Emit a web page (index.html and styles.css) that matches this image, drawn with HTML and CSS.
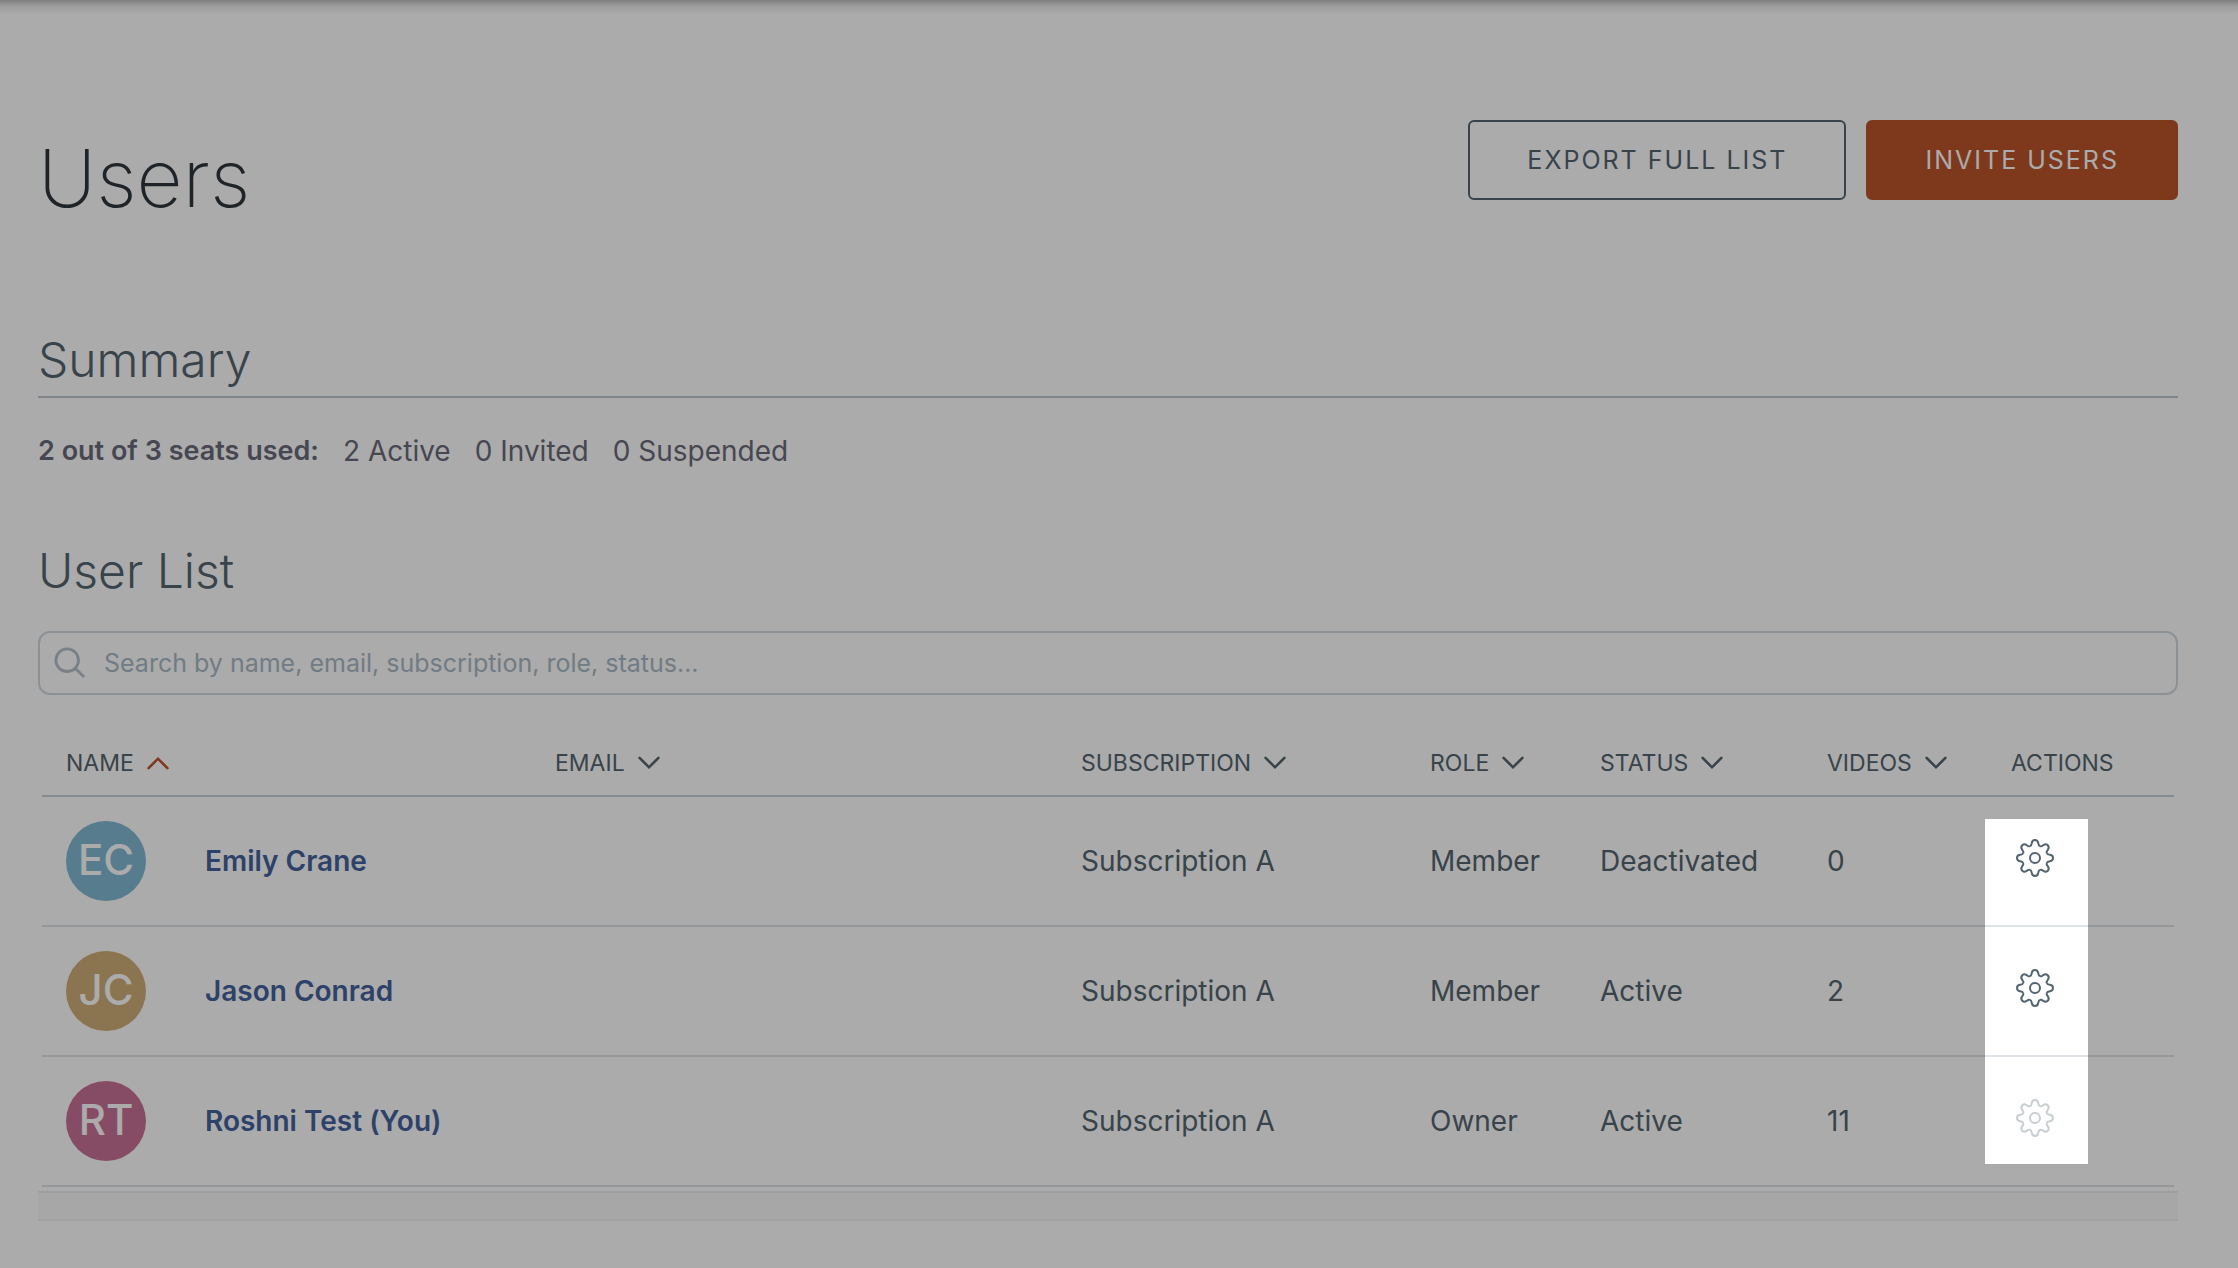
FILE: index.html
```html
<!DOCTYPE html>
<html lang="en">

<head>
    <meta charset="UTF-8">
    <meta name="viewport" content="width=device-width, initial-scale=1">
    <title>Users</title>
    <link rel="stylesheet" href="styles.css">
</head>

<body>
    <!-- shared icons -->
    <svg class="sprite" aria-hidden="true">
        <symbol id="chevron" viewBox="0 0 28 16">
            <path d="M3 2l11 11 11-11" />
        </symbol>
        <symbol id="gear" viewBox="-20 -20 40 40">
            <path id="tooth" d="M-4.900-11.800C-3.500-12.400-3.400-13.600-3.200-15C-2.900-17-1.800-18 0-18C1.800-18 2.900-17 3.200-15C3.400-13.600 3.500-12.400 4.900-11.800" />
            <use href="#tooth" transform="rotate(45)" />
            <use href="#tooth" transform="rotate(90)" />
            <use href="#tooth" transform="rotate(135)" />
            <use href="#tooth" transform="rotate(180)" />
            <use href="#tooth" transform="rotate(225)" />
            <use href="#tooth" transform="rotate(270)" />
            <use href="#tooth" transform="rotate(315)" />
            <circle r="5" />
        </symbol>
    </svg>

    <main class="page">
        <header class="page-header">
            <h1>Users</h1>
            <div class="buttons">
                <button type="button" class="btn">EXPORT FULL LIST</button>
                <button type="button" class="btn btn-primary">INVITE USERS</button>
            </div>
        </header>

        <section class="summary">
            <h2>Summary</h2>
            <p class="seats">
                <strong>2 out of 3 seats used:</strong>
                <span>2 Active</span>
                <span>0 Invited</span>
                <span>0 Suspended</span>
            </p>
        </section>

        <section class="user-list">
            <h2>User List</h2>
            <label class="search">
                <svg viewBox="0 0 34 34" aria-hidden="true">
                    <circle cx="14" cy="14" r="12" />
                    <path d="M23 23l9 9" />
                </svg>
                <input type="search" aria-label="Search users" placeholder="Search by name, email, subscription, role, status...">
            </label>

            <table class="users">
                <colgroup>
                    <col class="col-name">
                    <col>
                    <col class="col-subscription">
                    <col class="col-role">
                    <col class="col-status">
                    <col class="col-videos">
                    <col class="col-actions">
                </colgroup>
                <thead>
                    <tr>
                        <th><button type="button" class="sort sorted">NAME <svg><use href="#chevron" /></svg></button></th>
                        <th><button type="button" class="sort">EMAIL <svg><use href="#chevron" /></svg></button></th>
                        <th><button type="button" class="sort">SUBSCRIPTION <svg><use href="#chevron" /></svg></button></th>
                        <th><button type="button" class="sort">ROLE <svg><use href="#chevron" /></svg></button></th>
                        <th><button type="button" class="sort">STATUS <svg><use href="#chevron" /></svg></button></th>
                        <th><button type="button" class="sort">VIDEOS <svg><use href="#chevron" /></svg></button></th>
                        <th>ACTIONS</th>
                    </tr>
                </thead>
                <tbody>
                    <tr>
                        <td>
                            <div class="user">
                                <span class="avatar blue">EC</span>
                                <a href="#">Emily Crane</a>
                            </div>
                        </td>
                        <td></td>
                        <td>Subscription A</td>
                        <td>Member</td>
                        <td>Deactivated</td>
                        <td>0</td>
                        <td class="actions">
                            <button type="button" class="gear" aria-label="Manage Emily Crane"><svg><use href="#gear" /></svg></button>
                            <!-- dims everything except the gear column -->
                            <div class="spotlight"></div>
                        </td>
                    </tr>
                    <tr>
                        <td>
                            <div class="user">
                                <span class="avatar gold">JC</span>
                                <a href="#">Jason Conrad</a>
                            </div>
                        </td>
                        <td></td>
                        <td>Subscription A</td>
                        <td>Member</td>
                        <td>Active</td>
                        <td>2</td>
                        <td class="actions">
                            <button type="button" class="gear" aria-label="Manage Jason Conrad"><svg><use href="#gear" /></svg></button>
                        </td>
                    </tr>
                    <tr>
                        <td>
                            <div class="user">
                                <span class="avatar pink">RT</span>
                                <a href="#">Roshni Test (You)</a>
                            </div>
                        </td>
                        <td></td>
                        <td>Subscription A</td>
                        <td>Owner</td>
                        <td>Active</td>
                        <td>11</td>
                        <td class="actions">
                            <button type="button" class="gear" aria-label="Manage Roshni Test" disabled><svg><use href="#gear" /></svg></button>
                        </td>
                    </tr>
                </tbody>
            </table>
            <div class="list-footer"></div>
        </section>
    </main>
</body>

</html>
```
FILE: styles.css
```css
* {
    box-sizing: border-box;
}

body {
    min-height: 100vh;
    margin: 0;
    background: #fff linear-gradient(#bdbdbd, #e9e9e9 6px, #fff 14px) no-repeat;
    background-size: 100% 14px;
    color: #54656f;
    font-family: Inter, "Liberation Sans", sans-serif;
    font-size: 28px;
    line-height: 40px;
}

.sprite {
    display: none;
}

button {
    font: inherit;
    color: inherit;
    cursor: pointer;
}

.page {
    padding: 120px 60px 40px 38px;
}

.page-header {
    display: flex;
    justify-content: space-between;
    align-items: flex-start;
}

h1 {
    margin: 8px 0 0;
    color: #2d373c;
    font-size: 80px;
    font-weight: 200;
    line-height: 100px;
}

h2 {
    margin: 0;
    font-size: 48px;
    font-weight: 300;
    line-height: 60px;
}

.buttons {
    display: flex;
    gap: 20px;
}

.btn {
    height: 80px;
    padding: 0 57px;
    border: 2px solid #54656f;
    border-radius: 6px;
    background: transparent;
    font-size: 25px;
    letter-spacing: 2px;
}

.btn-primary {
    border-color: #bd542a;
    background: #bd542a;
    color: #fff;
}

.summary {
    margin-top: 102px;
}

.summary h2 {
    padding-bottom: 6px;
    border-bottom: 2px solid #bec7cf;
}

.seats {
    display: flex;
    gap: 24px;
    margin: 33px 0 0;
    color: #6b6b7b;
}

.seats strong {
    font-size: 27px;
    font-weight: 600;
}

.user-list {
    margin-top: 70px;
}

.search {
    display: flex;
    align-items: center;
    gap: 18px;
    height: 64px;
    margin-top: 30px;
    padding: 0 14px;
    border: 2px solid #d0d8de;
    border-radius: 12px;
}

.search svg {
    width: 32px;
    height: 32px;
    fill: none;
    stroke: #b5c1ca;
    stroke-width: 3;
}

.search input {
    flex: 1;
    padding: 0;
    border: 0;
    outline: 0;
    background: none;
    color: inherit;
    font: inherit;
    font-size: 25px;
}

.search input::placeholder {
    color: #a9b9c5;
}

.users {
    width: calc(100% - 8px);
    margin: 36px 4px 4px;
    border-collapse: separate;
    border-spacing: 0;
    table-layout: fixed;
}

.col-name {
    width: 489px;
}

.col-subscription {
    width: 349px;
}

.col-role {
    width: 170px;
}

.col-status {
    width: 227px;
}

.col-videos {
    width: 184px;
}

.col-actions {
    width: 187px;
}

.users th {
    height: 66px;
    padding: 0 0 0 24px;
    border-bottom: 2px solid #c6d0d6;
    font-size: 23px;
    font-weight: 400;
    text-align: left;
}

.users td {
    height: 130px;
    padding: 0 0 0 24px;
    border-bottom: 2px solid #dde3e7;
}

.sort {
    display: flex;
    align-items: center;
    gap: 12px;
    padding: 0;
    border: 0;
    background: none;
}

.sort svg {
    width: 24px;
    height: 14px;
    fill: none;
    stroke: #54656f;
    stroke-width: 3;
    stroke-linecap: round;
}

.sort.sorted svg {
    stroke: #bd542a;
    transform: rotate(180deg);
}

.user {
    display: flex;
    align-items: center;
    gap: 59px;
}

.user a {
    color: #45639d;
    font-weight: 600;
    text-decoration: none;
}

.avatar {
    width: 80px;
    height: 80px;
    border-radius: 50%;
    color: #fff;
    font-size: 42px;
    font-weight: 500;
    line-height: 78px;
    text-align: center;
}

.blue {
    background: #82bad3;
}

.gold {
    background: #d0ae78;
}

.pink {
    background: #c97297;
}

.users .actions {
    position: relative;
    padding-left: 28px;
}

.gear {
    display: block;
    width: 40px;
    height: 40px;
    margin-bottom: 6px;
    padding: 0;
    border: 0;
    background: none;
}

.gear svg {
    display: block;
    width: 40px;
    height: 40px;
    fill: none;
    stroke: #54656f;
    stroke-width: 2;
}

.gear:disabled svg {
    stroke: #c8cfd3;
}

.spotlight {
    position: absolute;
    z-index: 1;
    top: 22px;
    left: -2px;
    width: 103px;
    height: 345px;
    box-shadow: 0 0 0 9999px rgba(0, 0, 0, 0.33);
    pointer-events: none;
}

.list-footer {
    height: 30px;
    border-top: 2px solid #ededed;
    border-bottom: 2px solid #f0f0f0;
    background: #fafafa;
}
```
